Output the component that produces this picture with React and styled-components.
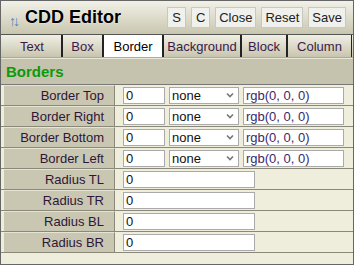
import React from "react";
import styled, { createGlobalStyle } from "styled-components";

const GlobalStyle = createGlobalStyle`
  body {
    margin: 0;
    background: #fff;
    font-family: "Liberation Sans", Arial, sans-serif;
  }
`;

const tabs = ["Text", "Box", "Border", "Background", "Block", "Column"];
const tabWidths = [60, 41, 60, 78, 46, 64];

const borderRows = ["Border Top", "Border Right", "Border Bottom", "Border Left"];
const radiusRows = ["Radius TL", "Radius TR", "Radius BL", "Radius BR"];

export default function App() {
  return (
    <>
      <GlobalStyle />
      <Panel>
        <Header>
          <Arrows>↑↓</Arrows>
          <Title>CDD Editor</Title>
          <Buttons>
            <Btn>S</Btn>
            <Btn>C</Btn>
            <Btn>Close</Btn>
            <Btn>Reset</Btn>
            <Btn>Save</Btn>
          </Buttons>
        </Header>
        <Tabs>
          {tabs.map((t, i) => (
            <Tab key={t} active={t === "Border"} style={{ width: tabWidths[i] }}>
              {t}
            </Tab>
          ))}
        </Tabs>
        <Section>Borders</Section>
        {borderRows.map((r) => (
          <Row key={r}>
            <Label>{r}</Label>
            <Value>
              <Input small defaultValue="0" />
              <Select>
                <span>none</span>
                <Chevron viewBox="0 0 8 6">
                  <path d="M1 1.5 L4 4.5 L7 1.5" fill="none" stroke="#777" strokeWidth="1.6" />
                </Chevron>
              </Select>
              <Input color defaultValue="rgb(0, 0, 0)" />
            </Value>
          </Row>
        ))}
        {radiusRows.map((r) => (
          <Row key={r}>
            <Label>{r}</Label>
            <Value>
              <Input wide defaultValue="0" />
            </Value>
          </Row>
        ))}
      </Panel>
    </>
  );
}

const Panel = styled.div`
  width: 352px;
  height: 263px;
  border: 1px solid #666;
  background: #efeddc;
  overflow: hidden;
`;

const Header = styled.div`
  height: 33px;
  display: flex;
  align-items: center;
  padding-left: 8px;
  background: linear-gradient(#f2f1e8, #c9c6af);
  border-bottom: 1px solid #555;
`;

const Arrows = styled.span`
  font-size: 14px;
  color: #4a80c4;
  letter-spacing: -3px;
  margin-top: 6px;
  margin-right: 8px;
`;

const Title = styled.div`
  font-size: 18px;
  font-weight: bold;
  color: #000;
  text-shadow: 0 0 2px rgba(255, 255, 255, 0.9);
`;

const Buttons = styled.div`
  margin-left: auto;
  margin-right: 7px;
  display: flex;
  gap: 5px;
`;

const Btn = styled.button`
  height: 21px;
  padding: 0 3px;
  min-width: 19px;
  border: 1px solid #c8c8c0;
  background: #f0f0ec;
  font-family: "Liberation Sans", Arial, sans-serif;
  font-size: 13px;
  color: #222;
`;

const Tabs = styled.div`
  display: flex;
  height: 22px;
  padding-left: 2px;
  background: linear-gradient(#f0efe4, #c8c5ae);
  border-bottom: 1px solid #aaa;
`;

const Tab = styled.div`
  display: flex;
  align-items: center;
  justify-content: center;
  font-size: 13px;
  color: ${({ active }) => (active ? "#000" : "#3a1a4a")};
  background: ${({ active }) => (active ? "#fff" : "transparent")};
  border-right: 2px solid #222;
  box-sizing: border-box;
  &:last-child {
    border-right: 1px solid #222;
  }
`;

const Section = styled.div`
  height: 25px;
  display: flex;
  align-items: center;
  padding-left: 5px;
  font-size: 15px;
  font-weight: bold;
  color: #0a9a0a;
  background: #c5c3ad;
  border-top: 1px solid #e8e6d6;
  border-bottom: 1px solid #777;
`;

const Row = styled.div`
  display: flex;
  height: 20px;
  border-bottom: 1px solid #8a8878;
`;

const Label = styled.div`
  width: 111px;
  margin-left: 3px;
  box-sizing: border-box;
  padding-right: 10px;
  display: flex;
  align-items: center;
  justify-content: flex-end;
  font-size: 13px;
  color: #2e1638;
  background: #c9c7b1;
  border-top: 1px solid #e6e4d4;
  border-right: 1px solid #8a8878;
`;

const Value = styled.div`
  display: flex;
  align-items: center;
  gap: 4px;
  padding-left: 8px;
`;

const Input = styled.input.withConfig({
  shouldForwardProp: (p) => !["small", "wide", "color"].includes(p),
})`
  box-sizing: border-box;
  height: 17px;
  width: ${({ small, wide }) => (small ? "42px" : wide ? "132px" : "101px")};
  border: 1px solid #aaa;
  background: #fff;
  padding: 0 2px;
  font-family: "Liberation Sans", Arial, sans-serif;
  font-size: 13px;
  color: ${({ color }) => (color ? "#3a2a6a" : "#111")};
`;

const Select = styled.div`
  box-sizing: border-box;
  height: 17px;
  width: 70px;
  border: 1px solid #aaa;
  background: #fff;
  display: flex;
  align-items: center;
  justify-content: space-between;
  padding: 0 4px 0 2px;
  font-size: 13px;
  color: #111;
`;

const Chevron = styled.svg`
  width: 8px;
  height: 6px;
`;
